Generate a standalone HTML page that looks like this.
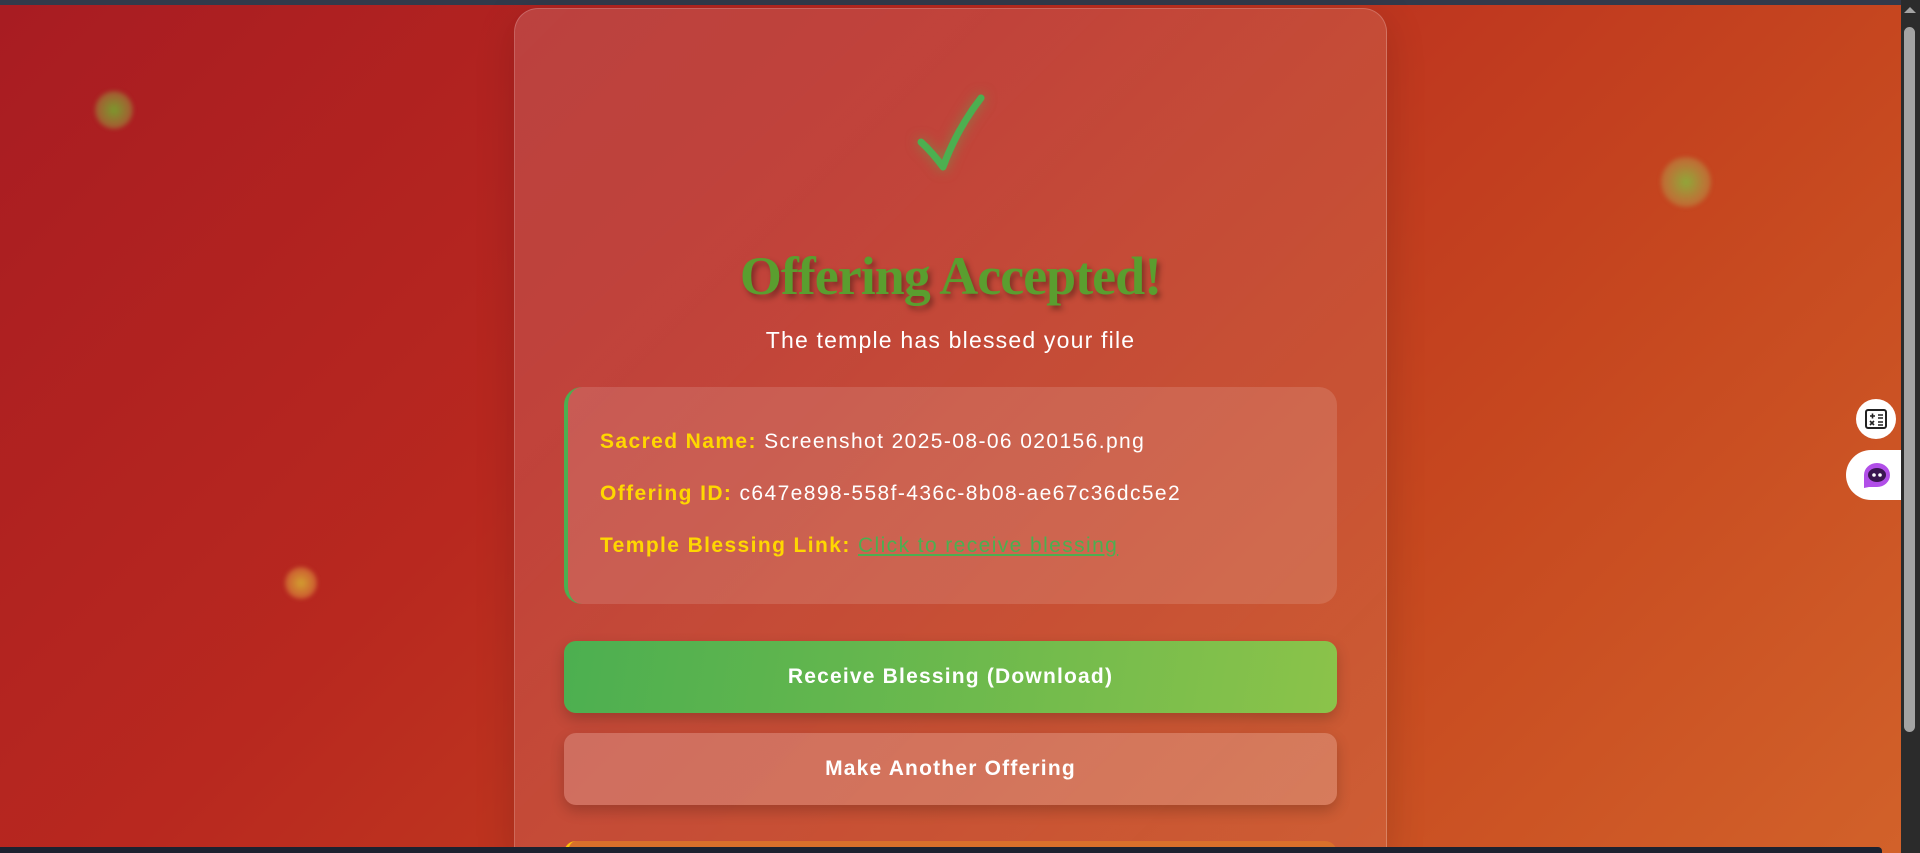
<!DOCTYPE html>
<html><head><meta charset="utf-8"><style>
*{box-sizing:border-box;margin:0;padding:0}
html,body{width:1920px;height:853px;overflow:hidden}
body{background:linear-gradient(135deg,#a81c22 0%,#b8281f 35%,#c6471f 70%,#d2622a 100%);font-family:"Liberation Sans",sans-serif;position:relative}
.topbar{position:absolute;left:0;top:0;width:1920px;height:5px;background:#323a4b}
.botbar{position:absolute;left:0;top:847px;width:1882px;height:6px;background:#1c2230;border-radius:0 4px 0 0}
.sb{position:absolute;left:1901px;top:0;width:19px;height:853px;background:#2b2b2b}
.sb .th{position:absolute;left:3px;width:11px;background:#a3a3a3;border-radius:6px}
.sb .ar{position:absolute;left:3px;top:7px;border:6px solid transparent;border-bottom:6px solid #a3a3a3;border-top:0}
.orb{position:absolute;border-radius:50%;filter:blur(2px)}
.card{position:absolute;left:514px;top:8px;width:873px;height:845px;border-radius:24px 24px 0 0;background:linear-gradient(135deg,rgba(255,255,255,.14),rgba(255,255,255,.08));border:1px solid rgba(255,255,255,.2);border-bottom:0;box-shadow:0 10px 40px rgba(0,0,0,.15);overflow:hidden}
.check{position:absolute;left:390px;top:78px}
h1{position:absolute;left:0;width:100%;top:236px;text-align:center;font-family:"Liberation Serif",serif;font-weight:bold;font-size:54px;color:#5a9e2f;text-shadow:3px 4px 6px rgba(0,0,0,.35);letter-spacing:-1px}
.sub{position:absolute;left:0;width:100%;top:318px;text-align:center;color:#fff;font-size:23px;letter-spacing:1.2px}
.info{position:absolute;left:49px;top:378px;width:773px;height:217px;border-radius:18px;background:rgba(255,255,255,.13);border-left:4px solid #4caf50}
.info p{position:absolute;left:32px;font-size:21px;color:#fff;letter-spacing:1.4px}
.info b{color:#ffd700}
.info a{color:#4caf50;text-decoration:underline}
.btn{position:absolute;left:49px;width:773px;height:72px;border-radius:12px;color:#fff;font-weight:bold;font-size:21px;letter-spacing:1.2px;text-align:center;line-height:72px;box-shadow:0 6px 14px rgba(0,0,0,.2)}
.b1{top:632px;background:linear-gradient(100deg,#4caf50,#8bc34a)}
.b2{top:724px;background:rgba(255,255,255,.2)}
.b3{position:absolute;left:49px;top:832px;width:773px;height:60px;border-radius:12px;background:#d9702b;border-left:4px solid #ffc107}
.pill{position:absolute;background:#fff;border-radius:30px}
</style></head><body>
<div class="topbar"></div>
<div class="orb" style="left:95px;top:91px;width:38px;height:38px;background:radial-gradient(circle,#7a9a2e 0%,rgba(150,150,60,.6) 55%,rgba(200,120,80,.2) 100%)"></div>
<div class="orb" style="left:1661px;top:157px;width:50px;height:50px;background:radial-gradient(circle,#8fa83a 0%,rgba(180,150,70,.6) 55%,rgba(220,130,80,.2) 100%)"></div>
<div class="orb" style="left:285px;top:567px;width:32px;height:32px;background:radial-gradient(circle,#d2a030 0%,rgba(220,140,60,.6) 60%,rgba(220,120,80,.2) 100%)"></div>
<div class="card">
<svg class="check" width="90" height="100" viewBox="0 0 90 100" style="filter:drop-shadow(0 0 6px rgba(90,170,80,.6))"><path d="M16 55 Q28 66 38 80 Q52 42 76 11" fill="none" stroke="#4caf50" stroke-width="7" stroke-linecap="round" stroke-linejoin="round"/></svg>
<h1>Offering Accepted!</h1>
<div class="sub">The temple has blessed your file</div>
<div class="info">
<p style="top:43px"><b>Sacred Name:</b> Screenshot 2025-08-06 020156.png</p>
<p style="top:95px"><b>Offering ID:</b> c647e898-558f-436c-8b08-ae67c36dc5e2</p>
<p style="top:147px"><b>Temple Blessing Link:</b> <a>Click to receive blessing</a></p>
</div>
<div class="btn b1">Receive Blessing (Download)</div>
<div class="btn b2">Make Another Offering</div>
<div class="b3"></div>
</div>
<div class="pill" style="left:1856px;top:399px;width:40px;height:40px;border-radius:50%;text-align:center;line-height:40px"><svg width="24" height="24" viewBox="0 0 24 24" style="vertical-align:middle"><rect x="2" y="3" width="20" height="18" rx="2" fill="none" stroke="#222" stroke-width="2"/><path d="M6 9h5M8.5 6.5v5M14 8h5M14 11h5M6 14l4 4M10 14l-4 4M14 15h5M14 18h5" stroke="#222" stroke-width="1.6"/></svg></div>
<div class="pill" style="left:1846px;top:450px;width:60px;height:50px;border-radius:25px 0 0 25px"><svg width="34" height="30" viewBox="0 0 34 30" style="position:absolute;left:14px;top:10px"><path d="M4 28V15a13 12 0 1 1 13 12H9z" fill="#b14ee8"/><ellipse cx="17" cy="15" rx="9" ry="7" fill="#3a1550"/><circle cx="14" cy="15" r="1.8" fill="#fff"/><circle cx="20" cy="15" r="1.8" fill="#fff"/></svg></div>
<div class="sb"><div class="ar"></div><div class="th" style="top:27px;height:705px"></div></div>
<div class="botbar"></div>
</body></html>
